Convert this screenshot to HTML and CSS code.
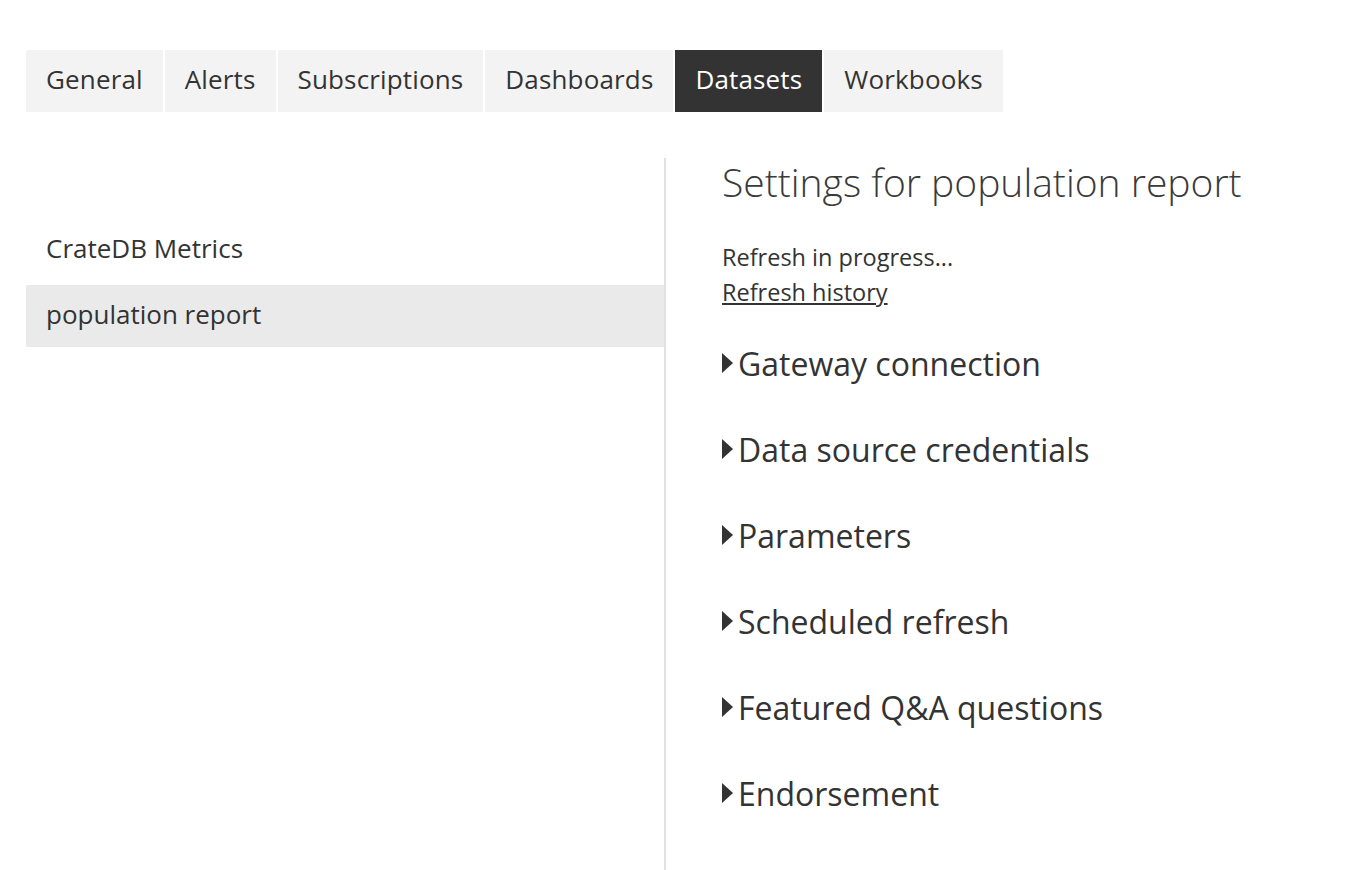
FILE: index.html
```html
<!DOCTYPE html>
<html>
<head>
<meta charset="utf-8">
<link rel="stylesheet" href="styles.css">
</head>
<body>
<div class="page">
  <nav class="tabs">
    <div class="tab">General</div>
    <div class="tab">Alerts</div>
    <div class="tab">Subscriptions</div>
    <div class="tab">Dashboards</div>
    <div class="tab active">Datasets</div>
    <div class="tab">Workbooks</div>
  </nav>
  <div class="content">
    <aside class="list">
      <div class="item">CrateDB Metrics</div>
      <div class="item selected">population report</div>
    </aside>
    <main class="settings">
      <h1 class="title">Settings for population report</h1>
      <div class="status">Refresh in progress...</div>
      <a class="history">Refresh history</a>
      <div class="sections">
        <div class="section"><span class="caret"></span>Gateway connection</div>
        <div class="section"><span class="caret"></span>Data source credentials</div>
        <div class="section"><span class="caret"></span>Parameters</div>
        <div class="section"><span class="caret"></span>Scheduled refresh</div>
        <div class="section"><span class="caret"></span>Featured Q&amp;A questions</div>
        <div class="section"><span class="caret"></span>Endorsement</div>
      </div>
    </main>
  </div>
</div>
</body>
</html>
```
FILE: styles.css
```css
html, body {
  margin: 0;
  padding: 0;
  background: #ffffff;
}
body {
  font-family: "Segoe UI", "Open Sans", "Noto Sans", sans-serif;
  color: #333333;
  height: 870px;
  overflow: hidden;
}
.page {
  padding: 50px 0 0 26px;
}
.tabs {
  display: flex;
  gap: 2px;
}
.tab {
  height: 62px;
  line-height: 58px;
  padding: 0 20px;
  background: #f3f3f3;
  font-size: 26px;
  color: #333;
  letter-spacing: 0.15px;
}
.tab.active {
  background: #333333;
  color: #ffffff;
}
.content {
  display: flex;
  margin-top: 46px;
  height: 712px;
}
.list {
  width: 638px;
  padding-top: 65px;
  border-right: 2px solid #e1e1e1;
}
.item {
  height: 62px;
  line-height: 50px;
  padding-left: 20px;
  font-size: 26px;
}
.item.selected {
  background: #eaeaea;
  line-height: 58px;
}
.settings {
  padding-left: 56px;
}
.title {
  margin: 0;
  font-weight: 300;
  font-size: 39px;
  line-height: 48px;
  color: #3a3a3a;
}
.status {
  margin-top: 34px;
  font-size: 23.5px;
  line-height: 35px;
}
.history {
  display: inline-block;
  font-size: 23.5px;
  line-height: 35px;
  text-decoration: underline;
}
.sections {
  margin-top: 10px;
}
.section {
  height: 86px;
  display: flex;
  align-items: center;
  font-size: 32px;
}
.caret {
  width: 0;
  height: 0;
  border-top: 10px solid transparent;
  border-bottom: 10px solid transparent;
  border-left: 11px solid #333;
  margin-right: 5px;
}
```
